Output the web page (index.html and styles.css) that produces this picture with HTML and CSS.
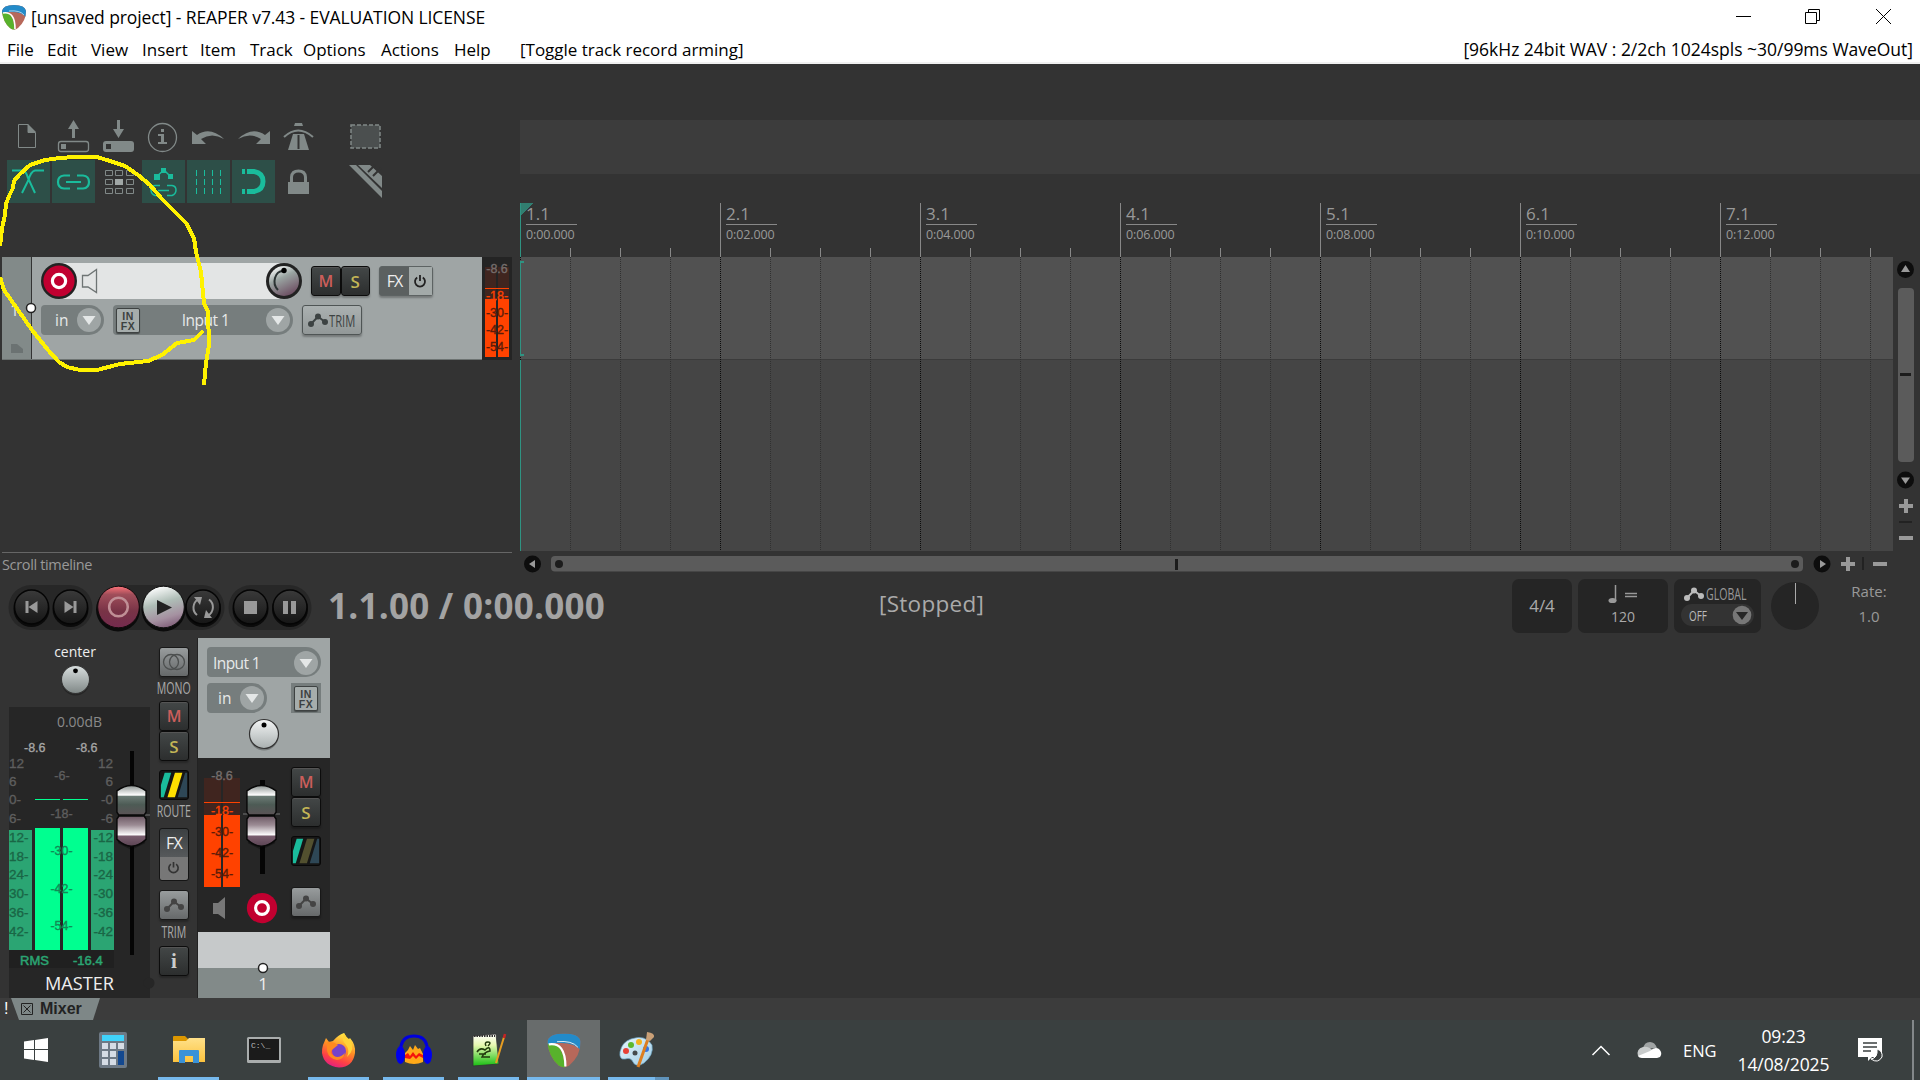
FILE: index.html
```html
<!DOCTYPE html>
<html lang="en">
<head>
<meta charset="utf-8">
<title>[unsaved project] - REAPER v7.43 - EVALUATION LICENSE</title>
<link rel="stylesheet" href="styles.css">
</head>
<body>
<svg class="defs" width="0" height="0">
  <defs>
    <linearGradient id="knobFill" x1="0" y1="0" x2="0" y2="1"><stop offset="0" stop-color="#d9dfdf"/><stop offset="1" stop-color="#7f8786"/></linearGradient>
    <linearGradient id="knobLight" x1="0" y1="0" x2="0" y2="1"><stop offset="0" stop-color="#f3f5f5"/><stop offset="1" stop-color="#a9b0b0"/></linearGradient>
    <linearGradient id="knobPink" x1="0.2" y1="0" x2="0.7" y2="1"><stop offset="0" stop-color="#fff"/><stop offset=".4" stop-color="#9aa5a2"/><stop offset="1" stop-color="#6b4b60"/></linearGradient>
    <linearGradient id="blackBtn" x1="0" y1="0" x2="0" y2="1"><stop offset="0" stop-color="#3a3a3a"/><stop offset="1" stop-color="#161616"/></linearGradient>
    <linearGradient id="recBtn" x1="0" y1="0" x2="0" y2="1"><stop offset="0" stop-color="#ff7379"/><stop offset=".2" stop-color="#a04e5a"/><stop offset=".6" stop-color="#783346"/><stop offset="1" stop-color="#742b4e"/></linearGradient>
    <linearGradient id="playBtn" x1=".35" y1="0" x2=".65" y2="1"><stop offset="0" stop-color="#fff"/><stop offset=".4" stop-color="#aebdb6"/><stop offset=".75" stop-color="#a591a1"/><stop offset="1" stop-color="#7f5d78"/></linearGradient>
    <linearGradient id="capTop" x1="0" y1="0" x2="0" y2="1"><stop offset="0" stop-color="#8d9492"/><stop offset=".33" stop-color="#fff"/><stop offset=".36" stop-color="#6c7c76"/><stop offset=".65" stop-color="#4d5b55"/><stop offset="1" stop-color="#5b5356"/></linearGradient>
    <linearGradient id="capBot" x1="0" y1="0" x2="0" y2="1"><stop offset="0" stop-color="#6d5964"/><stop offset=".3" stop-color="#9c8c95"/><stop offset=".63" stop-color="#fff"/><stop offset=".66" stop-color="#7a5f70"/><stop offset="1" stop-color="#5b4453"/></linearGradient>
    <linearGradient id="foxFill" x1=".7" y1="0" x2=".3" y2="1"><stop offset="0" stop-color="#fff04a"/><stop offset=".45" stop-color="#ff8c24"/><stop offset=".75" stop-color="#ff4145"/><stop offset="1" stop-color="#e01c86"/></linearGradient>
    <linearGradient id="folderFill" x1="0" y1="0" x2="0" y2="1"><stop offset="0" stop-color="#ffe18a"/><stop offset="1" stop-color="#fcc33e"/></linearGradient>
    <linearGradient id="pageFill" x1="0" y1="0" x2="0" y2="1"><stop offset="0" stop-color="#fff"/><stop offset=".35" stop-color="#e7f8b0"/><stop offset="1" stop-color="#17bf12"/></linearGradient>
    <linearGradient id="paletteFill" x1="0" y1="0" x2="1" y2="1"><stop offset="0" stop-color="#e9f6fc"/><stop offset="1" stop-color="#9fcde6"/></linearGradient>
    <clipPath id="pickShape"><path d="M1 7Q2 1 13 1T25 7Q25 17 17 24Q13 27 9 24Q2 18 1 7Z"/></clipPath>
    <symbol id="pick" viewBox="0 0 26 26"><g clip-path="url(#pickShape)"><path d="M0 0H26V26H0Z" fill="#b7685a"/><path d="M0 8Q9 7 12 16L14 26H0Z" fill="#58b22c"/><path d="M0 0H26V15Q22 7 8 8L0 9Z" fill="#238bc9"/><path d="M2 9Q14 7 14 25" fill="none" stroke="#fff" stroke-width="1.6"/><path d="M8 7Q19 6 23 11" fill="none" stroke="#e6eef2" stroke-width=".7"/></g></symbol>
    <symbol id="env" viewBox="0 0 20 14"><path d="M3 11L10 3.5L17 9" fill="none" stroke="currentColor" stroke-width="2"/><circle cx="3" cy="11" r="3" fill="currentColor"/><circle cx="10" cy="3.5" r="3" fill="currentColor"/><circle cx="17" cy="9" r="3" fill="currentColor"/></symbol>
    <symbol id="power" viewBox="0 0 14 14"><path d="M4.2 3.4A5 5 0 1 0 9.8 3.4M7 1V7" fill="none" stroke="currentColor" stroke-width="1.8"/></symbol>
    <symbol id="combo" viewBox="0 0 26 26"><circle cx="13" cy="13" r="12" fill="#9fa5a5"/><path d="M6.500 9H19.500L13 18Z" fill="#e4e7e7"/></symbol>
    <symbol id="arm" viewBox="0 0 36 36"><circle cx="18" cy="18" r="16.500" fill="#c10030"/><circle cx="18" cy="18" r="7" fill="none" stroke="#fff" stroke-width="3.400"/></symbol>
    <symbol id="knob" viewBox="0 0 32 34"><circle cx="16" cy="18" r="14.500" fill="#0004"/><circle cx="16" cy="16" r="14.500" fill="var(--face, url(#knobLight))" stroke="#333" stroke-width="1.200"/><circle cx="16" cy="7" r="2.500" fill="#000"/></symbol>
    <symbol id="cap" viewBox="0 0 34 70"><path d="M3 12L17 5L31 12V61L17 68L3 61Z" fill="#0005"/><path d="M2 7Q17-4 32 7V29L30 32H4L2 29Z" fill="url(#capTop)" stroke="#080808" stroke-width="1.500"/><path d="M4 33H30L32 36V57Q17 71 2 57V36Z" fill="url(#capBot)" stroke="#080808" stroke-width="1.500"/></symbol>
    <symbol id="route" viewBox="0 0 30 30"><path d="M1 28V15L5 2H12L4 28Z" fill="#1abc9c"/><path d="M8 28L16 2H24L16 28Z" fill="var(--mid)"/><path d="M19 28L27 2H29V28Z" fill="#2e4756"/></symbol>
  </defs>
</svg>

<header class="titlebar">
  <svg class="logo" width="26" height="26"><use href="#pick"/></svg>
  <span class="title">[unsaved project] - REAPER v7.43 - EVALUATION LICENSE</span>
  <svg class="winbtns" width="176" height="36" viewBox="1728 0 176 36"><path d="M1736 16.500H1751M1805.500 12.500H1816.500V23.500H1805.500ZM1808.500 12V9.500H1819.500V20.500H1817M1876 9L1891 24M1891 9L1876 24" fill="none" stroke="#000" stroke-width="1"/></svg>
</header>
<nav class="menubar">
  <span>File</span><span>Edit</span><span>View</span><span>Insert</span><span>Item</span><span>Track</span><span>Options</span><span>Actions</span><span>Help</span><span>[Toggle track record arming]</span>
  <span class="device">[96kHz 24bit WAV : 2/2ch 1024spls ~30/99ms WaveOut]</span>
</nav>

<main class="workspace">
  <section class="left">
    <div class="toolbar">
      <svg class="tool" viewBox="7 115 43 43"><path d="M18.500 124.500H28V132.500H35.500V147.500H18.500Z" fill="none" stroke="#818988"/><path d="M28 124L36 132H28Z" fill="#818988"/></svg>
      <svg class="tool" viewBox="52 115 43 43"><rect x="58.500" y="141.500" width="30" height="10" rx="2.500" fill="none" stroke="#818988" stroke-width="1.300"/><path d="M61 144H66V149H61ZM72 138V129H68L73.500 120L79 129H75V138Z" fill="#818988"/></svg>
      <svg class="tool" viewBox="97 115 43 43"><rect x="103" y="141" width="31" height="11" rx="3" fill="#818988"/><path d="M106 144H111V149H106Z" fill="#333"/><path d="M117 120H120V129H124L118.500 138L113 129H117Z" fill="#818988"/></svg>
      <svg class="tool" viewBox="142 115 43 43"><circle cx="162.500" cy="137.500" r="14" fill="none" stroke="#818988" stroke-width="1.300"/><path d="M161 129H164V132H161ZM158 134H164V142H167V144H158V142H161V136H158Z" fill="#818988"/></svg>
      <svg class="tool" viewBox="187 115 43 43"><path d="M192 131V144H206L201 139Q212 132 224 139Q210 126 197 135Z" fill="#818988"/></svg>
      <svg class="tool" viewBox="232 115 43 43"><path d="M270 131V144H256L261 139Q250 132 238 139Q252 126 265 135Z" fill="#818988"/></svg>
      <svg class="tool" viewBox="277 115 43 43"><path d="M284 137Q298 124 313 137" fill="none" stroke="#818988" stroke-width="2"/><path d="M295 123H302L303 126H294ZM293 134H304L309 150H288Z" fill="#818988"/><path d="M298.500 135V149" stroke="#333" stroke-width="2"/></svg>
      <svg class="tool" viewBox="344 115 43 43"><rect x="351" y="125" width="29" height="23" fill="#4b4f4f" stroke="#818988" stroke-width="1.500" stroke-dasharray="4 2"/></svg>
      <svg class="tool on" viewBox="7 160 43 43"><path d="M12 170.500H22Q26 170.500 28 178L35 193M44 170.500H35Q31 171 28 181L22 193" fill="none" stroke="#1abc9c" stroke-width="2"/></svg>
      <svg class="tool on" viewBox="52 160 43 43"><path d="M70 175.500H64Q58 176 58 182T64 188.500H70M77 175.500H83Q89 176 89 182T83 188.500H77M66 182H81" fill="none" stroke="#1abc9c" stroke-width="2.200"/></svg>
      <svg class="tool" viewBox="97 160 43 43"><path d="M105.500 170.500h7v5h-7zm10 0h7v5h-7zm11 0h7v5h-7zm-21 9h7v5h-7zm10 0h7v5h-7zm11 0h7v5h-7zm-21 9h7v5h-7zm10 0h7v5h-7zm11 0h7v5h-7z" fill="none" stroke="#818988"/><path d="M115 179h8v6h-8z" fill="#a0a7a6"/></svg>
      <svg class="tool on" viewBox="142 160 43 43"><path d="M156 177L164 170L171 177M160 185.500H155Q151 186 151 190T155 195.500H160M167 185.500H172Q176 186 176 190T172 195.500H167M158 190.500H169" fill="none" stroke="#1abc9c" stroke-width="1.500"/><path d="M154 174h6v6h-6zM161 168h5v5h-5zM168 174h5v5h-5z" fill="#1abc9c"/></svg>
      <svg class="tool on" viewBox="187 160 43 43"><path d="M196.500 170V194M204.500 170V194M212.500 170V194M220.500 170V194" stroke="#1abc9c" stroke-dasharray="6 3" fill="none"/></svg>
      <svg class="tool on" viewBox="232 160 43 43"><path d="M247 171.500H254Q263 173 263 181.500T254 191.500H247" fill="none" stroke="#1abc9c" stroke-width="5"/><path d="M242 169h3v5h-3zM242 189h3v5h-3z" fill="#1abc9c"/></svg>
      <svg class="tool" viewBox="277 160 43 43"><path d="M291.500 182V177Q292 171 298.500 171T305.500 177V182" fill="none" stroke="#818988" stroke-width="3"/><path d="M288 182h21v12h-21z" fill="#818988"/></svg>
      <svg class="tool" viewBox="344 160 43 43"><path d="M349 165H356L382 191V198ZM358 165H370L382 176V188Z" fill="#818988"/><path d="M368 172L375 165M373 176L381 168" stroke="#333" stroke-width="2"/></svg>
    </div>

    <div class="track">
      <div class="gutter"><span>1</span><svg width="14" height="12"><path d="M1 1H7L13 6V10H1Z" fill="#6b7272"/></svg></div>
      <div class="tcp">
        <div class="tcprow">
          <div class="namebar">
            <svg width="36" height="36" viewBox="0 0 36 36"><circle cx="18" cy="18" r="18" fill="#222"/><use href="#arm" x="1" y="1" width="34" height="34"/></svg>
            <svg width="18" height="36" viewBox="80 263 18 36"><path d="M82.500 275.500H88L96.500 269.500V292.500L88 287H82.500Z" fill="none" stroke="#6e7474" stroke-width="1.300"/></svg>
            <svg class="vol" width="36" height="36" viewBox="0 0 36 36"><circle cx="18" cy="18" r="18" fill="#222"/><circle cx="18" cy="18" r="15" fill="url(#knobPink)"/><path d="M12 27Q7 22 9 15T17 8" fill="none" stroke="#2b3333" stroke-width="2"/><circle cx="18" cy="7.500" r="2.700" fill="#000"/></svg>
          </div>
          <div class="pair"><b class="btn mute">M</b><b class="btn solo">S</b></div>
          <div class="fxpair"><span>FX</span><i><svg width="14" height="14"><use href="#power"/></svg></i></div>
        </div>
        <div class="tcprow second">
          <div class="combo inmode">in<svg width="26" height="26"><use href="#combo"/></svg></div>
          <div class="combo input"><span class="infx">IN<br>FX</span><span class="lbl">Input 1</span><svg width="26" height="26"><use href="#combo"/></svg></div>
          <div class="trim"><svg width="20" height="14"><use href="#env"/></svg><span>TRIM</span></div>
        </div>
      </div>
      <svg class="tcpmeter" width="30" height="103" viewBox="482 257 30 103">
        <path d="M482 257H512V360H482Z" fill="#242424"/><path d="M485 267H496V299H485ZM498 267H509V299H498Z" fill="#40251f"/><path d="M485 288H509V289H485ZM485 299H496V357H485ZM498 299H509V357H498Z" fill="#ff4200"/>
        <g class="scale hot" text-anchor="middle"><text x="497" y="273" class="peak">-8.6</text><text x="497" y="300" class="edge">-18-</text><text x="497" y="317">-30-</text><text x="497" y="334">-42-</text><text x="497" y="351">-54-</text></g>
      </svg>
    </div>
    <div class="status">Scroll timeline</div>
  </section>

  <section class="right">
    <div class="infobar"></div>
    <div class="ruler">
      <div><b>1.1</b><span>0:00.000</span></div><div><b>2.1</b><span>0:02.000</span></div><div><b>3.1</b><span>0:04.000</span></div><div><b>4.1</b><span>0:06.000</span></div><div><b>5.1</b><span>0:08.000</span></div><div><b>6.1</b><span>0:10.000</span></div><div><b>7.1</b><span>0:12.000</span></div>
    </div>
    <svg class="arrange" width="1373" height="294" viewBox="0 0 1373 294">
      <defs><pattern id="grid" width="200" height="2" patternUnits="userSpaceOnUse"><path d="M0 0h1v1h-1z" fill="#0c0c0c"/><path d="M50 0h1v1h-1zM100 0h1v1h-1zM150 0h1v1h-1z" fill="#303030"/></pattern></defs>
      <path d="M0 0H1373V102H0Z" fill="#515151"/><path d="M0 102H1373V294H0Z" fill="#454545"/><path d="M0 102H1373V103H0Z" fill="#3b3b3b"/>
      <path d="M0 0H1373V293H0Z" fill="url(#grid)"/>
      <path d="M0 4H1V98H0ZM0 103H1V294H0ZM0 4H4V6H0ZM0 97H4V99H0Z" fill="#2f9382"/>
    </svg>
    <svg class="vscroll" width="27" height="294" viewBox="1893 257 27 294">
      <circle cx="1905.500" cy="269.500" r="8.500" fill="#0d0d0d"/><path d="M1901 272H1910L1905.500 265Z" fill="#999"/>
      <rect x="1898" y="288" width="16" height="174" rx="4" fill="#5b5b5b"/><path d="M1900 373h11v3h-11z" fill="#1c1c1c"/>
      <circle cx="1905.500" cy="480" r="8.500" fill="#0d0d0d"/><path d="M1901 477.500H1910L1905.500 484Z" fill="#999"/>
      <path d="M1899 504h14v4h-14zM1904 499h4v14h-4zM1899 536h14v4h-14z" fill="#999"/><path d="M1899 521h13v2h-13z" fill="#222"/>
    </svg>
    <svg class="hscroll" width="1400" height="29" viewBox="520 551 1400 29">
      <circle cx="532.500" cy="564" r="8.500" fill="#0d0d0d"/><path d="M535 560V568L529 564Z" fill="#999"/>
      <rect x="551" y="556" width="1252" height="15.500" rx="4" fill="#5b5b5b"/><circle cx="559" cy="564" r="4" fill="#1c1c1c"/><circle cx="1795" cy="564" r="4" fill="#1c1c1c"/><path d="M1175 559h3v11h-3z" fill="#1c1c1c"/>
      <circle cx="1822" cy="564" r="8.500" fill="#0d0d0d"/><path d="M1820 560V568L1826 564Z" fill="#999"/>
      <path d="M1841 562h14v4h-14zM1846 557h4v14h-4zM1873 562h14v4h-14z" fill="#999"/><path d="M1862 557h2v13h-2z" fill="#222"/>
    </svg>
  </section>
</main>

<section class="transport">
  <svg class="buttons" width="314" height="56" viewBox="0 580 314 56">
    <path d="M31 585H70A22.500 22.500 0 0 1 70 630H31A22.500 22.500 0 0 1 31 585ZM118 585H202A22.500 22.500 0 0 1 202 630H118ZM251 585H289A22.500 22.500 0 0 1 289 630H251A22.500 22.500 0 0 1 251 585Z" fill="#272727"/>
    <g fill="#0b0b0b"><circle cx="31.500" cy="609" r="18"/><circle cx="70.500" cy="609" r="18"/><circle cx="118" cy="609.500" r="22"/><circle cx="163.500" cy="609.500" r="22"/><circle cx="203" cy="609" r="18"/><circle cx="250.500" cy="609" r="18"/><circle cx="290" cy="609" r="18"/></g>
    <g fill="url(#blackBtn)" stroke="#050505" stroke-width="1.500"><circle cx="31.500" cy="607" r="17"/><circle cx="70.500" cy="607" r="17"/><circle cx="203" cy="607" r="17"/><circle cx="250.500" cy="607" r="17"/><circle cx="290" cy="607" r="17"/></g>
    <circle cx="118.500" cy="607" r="20.800" fill="url(#recBtn)" stroke="#120a0c"/><circle cx="118.500" cy="607" r="9.300" fill="none" stroke="#c08f96" stroke-width="2.600"/>
    <circle cx="163.500" cy="607" r="20.800" fill="url(#playBtn)" stroke="#111"/><path d="M157 600V615L172 607.500Z" fill="#222"/>
    <path d="M25.500 601h3v12h-3zM37.500 601V613L28.500 607ZM73.500 601h3v12h-3zM64.500 601V613L73.500 607ZM244 601h13v13h-13zM283 601h5v13h-5zM291 601h5v13h-5z" fill="#999"/>
    <path d="M197 615A9.500 9.500 0 0 1 198 599.500M209 599.500A9.500 9.500 0 0 1 208 615.500" fill="none" stroke="#999" stroke-width="2"/><path d="M194 597H202L200 605ZM212 618H204L206 610Z" fill="#999"/>
  </svg>
  <b class="time">1.1.00 / 0:00.000</b>
  <span class="stopped">[Stopped]</span>
  <div class="tbox sig">4/4</div>
  <div class="tbox tempo"><svg width="30" height="20"><path d="M7.500 1V17M17 9.500H29M17 12.500H29" stroke="#999" stroke-width="1.500"/><ellipse cx="4.500" cy="16.500" rx="4" ry="2.600" fill="#999"/></svg><span>120</span></div>
  <div class="tbox global"><div><svg width="20" height="14"><use href="#env"/></svg><span class="narrow">GLOBAL</span></div><div class="off"><span class="narrow">OFF</span><svg width="20" height="20"><circle cx="10" cy="10" r="9.300" fill="#777"/><path d="M4 7H16L10 15Z" fill="#262626"/></svg></div></div>
  <svg class="dial" width="48" height="48"><circle cx="24" cy="24" r="24" fill="#252525"/><path d="M24.500 1V22" stroke="#aaa"/></svg>
  <div class="rate"><span>Rate:</span><span>1.0</span></div>
</section>

<section class="mixer">
  <div class="master">
    <div class="pan"><span>center</span><svg class="panface" width="31" height="33"><use href="#knob"/></svg></div>
    <svg class="mmeter" width="150" height="291" viewBox="9 707 150 291">
      <path d="M9 707H150V998H9Z" fill="#262626"/><circle cx="149" cy="983" r="5.500" fill="#262626"/>
      <path d="M9 950H114V968H9Z" fill="#202020"/>
      <path d="M9 830H32V950H9ZM91 830H114V950H91Z" fill="#2ba573"/><path d="M35 828H60V950H35ZM63 828H88V950H63ZM35 799h25v1h-25zM63 799h25v1h-25z" fill="#00ff90"/>
      <text x="57" y="727" font-size="15" fill="#8a8a8a" textLength="45" lengthAdjust="spacingAndGlyphs">0.00dB</text>
      <g class="scale lite"><text x="24" y="752">-8.6</text><text x="76" y="752">-8.6</text></g>
      <g class="scale big gray"><text x="9" y="768">12</text><text x="9" y="786">6</text><text x="9" y="804">0-</text><text x="9" y="823">6-</text></g>
      <g class="scale big green"><text x="9" y="842">12-</text><text x="9" y="861">18-</text><text x="9" y="879">24-</text><text x="9" y="898">30-</text><text x="9" y="917">36-</text><text x="9" y="936">42-</text></g>
      <g class="scale big gray" text-anchor="end"><text x="113" y="768">12</text><text x="113" y="786">6</text><text x="113" y="804">-0</text><text x="113" y="823">-6</text></g>
      <g class="scale big green" text-anchor="end"><text x="113" y="842">-12</text><text x="113" y="861">-18</text><text x="113" y="879">-24</text><text x="113" y="898">-30</text><text x="113" y="917">-36</text><text x="113" y="936">-42</text></g>
      <g class="scale gray" text-anchor="middle"><text x="62" y="780">-6-</text><text x="61.500" y="818">-18-</text></g>
      <g class="scale bright" text-anchor="middle"><text x="61.500" y="855">-30-</text><text x="61.500" y="893">-42-</text><text x="61.500" y="930">-54-</text></g>
      <g class="scale rms"><text x="20" y="965">RMS</text><text x="73" y="965">-16.4</text></g>
      <text x="45" y="990" font-size="19" fill="#eee" textLength="69" lengthAdjust="spacingAndGlyphs">MASTER</text>
      <path d="M130 751h4v204h-4z" fill="#050505"/><path d="M125 815H150" stroke="#777"/><use href="#cap" x="114.500" y="784" width="34" height="68"/>
    </svg>
  </div>
  <div class="mbuttons">
    <div class="gbtn mono"><svg width="24" height="18"><circle cx="9" cy="9" r="7.500" fill="none" stroke="#4c4f4f" stroke-width="1.300"/><circle cx="15" cy="9" r="7.500" fill="none" stroke="#4c4f4f" stroke-width="1.300"/></svg></div>
    <span class="cap mono-l"><span class="narrow">MONO</span></span>
    <b class="btn mute">M</b><b class="btn solo">S</b>
    <svg class="route master-route" width="30" height="30"><use href="#route"/></svg>
    <span class="cap route-l"><span class="narrow">ROUTE</span></span>
    <div class="vfx"><span>FX</span><i><svg width="13" height="13"><use href="#power"/></svg></i></div>
    <div class="gbtn env"><svg width="20" height="14"><use href="#env"/></svg></div>
    <span class="cap trim-l"><span class="narrow">TRIM</span></span>
    <b class="btn info">i</b>
  </div>
  <div class="strip">
    <div class="striptop">
      <div class="combo">Input 1<svg width="26" height="26"><use href="#combo"/></svg></div>
      <div class="inrow"><div class="combo small">in<svg width="26" height="26"><use href="#combo"/></svg></div><div class="infxbox"><span class="infx">IN<br>FX</span></div></div>
      <svg class="panknob" width="32" height="34"><use href="#knob"/></svg>
    </div>
    <div class="stripmid">
      <svg width="93" height="174" viewBox="198 758 93 174">
        <path d="M204 778H221V815H204ZM223 778H240V815H223Z" fill="#40251f"/><path d="M204 802H240V803H204ZM204 815H221V887H204ZM223 815H240V887H223Z" fill="#ff4200"/>
        <g class="scale hot" text-anchor="middle"><text x="222" y="780" class="peak">-8.6</text><text x="222" y="815" class="edge">-18-</text><text x="222" y="836">-30-</text><text x="222" y="857">-42-</text><text x="222" y="878">-54-</text></g>
        <path d="M260 780h5v94h-5z" fill="#050505"/><path d="M243 814H280" stroke="#777"/><use href="#cap" x="244.500" y="784" width="34" height="68"/>
        <path d="M213 903H218L225 897V919L218 914H213Z" fill="#777"/><use href="#arm" x="245.500" y="891.500" width="33" height="33"/>
      </svg>
      <div class="sbtns"><b class="btn mute">M</b><b class="btn solo">S</b><svg class="route dim" width="30" height="30"><use href="#route"/></svg><div class="gbtn env"><svg width="20" height="14"><use href="#env"/></svg></div></div>
    </div>
    <div class="stripname"></div>
    <div class="stripnum">1</div>
  </div>
</section>

<div class="dock"><span class="bang">!</span><div class="tab"><svg width="12" height="12"><path d="M.5 .5H11.500V11.500H.5ZM2.500 2.500L9.500 9.500M9.500 2.500L2.500 9.500" fill="none" stroke="#222"/></svg><b>Mixer</b></div></div>

<footer class="taskbar">
  <div class="task start"><svg width="24" height="24"><path d="M0 3.500L10 2V11H0ZM11 2L24 0V11H11ZM0 12H10V22L0 20.500ZM11 12H24V24L11 22Z" fill="#fff"/></svg></div>
  <div class="task calc"><svg width="28" height="36"><rect width="28" height="36" rx="2" fill="#6d7985"/><path d="M3 3H25V9H3Z" fill="#40d3fb"/><path d="M3 11h6v6h-6zm8 0h6v6h-6zm8 0h6v6h-6zM3 19h6v6h-6zm8 0h6v6h-6zM3 27h6v6h-6zm8 0h6v6h-6z" fill="#d5dce5"/><path d="M19 19h6v14h-6z" fill="#13488f"/></svg></div>
  <div class="task run"><svg width="32" height="28"><path d="M0 1Q0 0 1 0H12L15 3V7H0Z" fill="#dc9700"/><path d="M0 5H13L16 2H32V26H0Z" fill="url(#folderFill)"/><path d="M6 27V15Q6 14 7 14H25Q26 14 26 15V27H20V20H12V27Z" fill="#3a92d8"/></svg></div>
  <div class="task"><svg width="34" height="26"><rect width="34" height="26" rx="1.500" fill="#a9adad"/><path d="M2 2H32V23H2Z" fill="#1b1b1b"/><text x="4" y="11" font-size="8" fill="#bbb" font-family="Liberation Mono">C:\_</text></svg></div>
  <div class="task run fox"><svg width="34" height="35"><path d="M1 12L4 5L7 9L11 8Q16 2 22 0Q24 4 26 7L28 5Q34 12 33 20Q31 34 17 34.500Q2 33 0 20Q0 15 1 12Z" fill="url(#foxFill)"/><circle cx="17" cy="18" r="7" fill="#7743c9"/><path d="M5 9Q11 8 16 12L11 16Q6 19 12 23Q17 26 23 20Q22 26 15 27Q7 26 5 18Z" fill="#ff8a1f"/><path d="M22 0Q19 7 24 12Q28 17 25 24Q34 16 28 7Q24 4 22 0Z" fill="#ffd338"/></svg></div>
  <div class="task run"><svg width="36" height="32"><path d="M5 18V12Q7 2 18 2T31 12V18" fill="none" stroke="#0000dc" stroke-width="3"/><path d="M9 28V19L12 16L14 12L17 16L19 11L22 15L24 14L27 20V28Q18 32 9 28Z" fill="#ffa918"/><path d="M9 21L12 19L14 22L17 18L20 22L23 19L27 21V24L23 22L20 25L17 22L14 25L9 24Z" fill="#f5140c"/><ellipse cx="4.500" cy="21" rx="4.500" ry="9" fill="#0000ed"/><ellipse cx="31.500" cy="21" rx="4.500" ry="9" fill="#0000ed"/></svg></div>
  <div class="task run"><svg width="34" height="34"><path d="M1 3L24 1L27 31L1 33Z" fill="url(#pageFill)" stroke="#333" stroke-width=".8"/><path d="M2 3H23" stroke="#333" stroke-width="2" stroke-dasharray="1.500 1"/><path d="M5 19Q8 14 13 17Q18 12 18 18Q12 19 10 24H18M7 21H14M14 13Q12 9 16 9T16 13" fill="none" stroke="#223b0d" stroke-width="1.500"/><path d="M32 4L24 30" stroke="#e79d22" stroke-width="2"/><path d="M33 1L32 5" stroke="#c42424" stroke-width="2.600"/></svg></div>
  <div class="task run active"><svg width="36" height="36"><use href="#pick" width="36" height="36"/></svg></div>
  <div class="task paint"><svg width="38" height="36"><path d="M12 7Q26 2 33 13Q35 23 25 31Q17 36 14 30Q12 25 6 27Q0 28 1 20Q3 10 12 7Z" fill="url(#paletteFill)" stroke="#6ba5c3" stroke-width=".7"/><circle cx="12" cy="13" r="3" fill="#5db82d"/><circle cx="20" cy="10" r="3" fill="#f5b21d"/><circle cx="7" cy="19" r="3" fill="#e74236"/><circle cx="27" cy="17" r="3" fill="#3575df"/><circle cx="16" cy="21" r="2.500" fill="#454b4d"/><path d="M29 7L19 35" stroke="#dc7e20" stroke-width="3"/><path d="M27 8L28 0Q36 1 35 5L31 9Z" fill="#c9a077"/></svg></div>
  <div class="tray">
    <svg width="18" height="11"><path d="M.5 10L9 1.500L17.500 10" fill="none" stroke="#fff" stroke-width="1.500"/></svg>
    <svg class="cloud" width="25" height="17"><path d="M6 7Q7 0 13 0Q18 0 20 6Z" fill="#a0a4a4"/><path d="M1 14Q-1 7 6 5Q12 4 16 9L6 16Z" fill="#c9cccc"/><path d="M13 9Q18 4 22 7Q26 11 23 15L20 16H5Q2 16 1 14Z" fill="#fff"/></svg>
    <span class="eng">ENG</span>
    <div class="clock"><span>09:23</span><span>14/08/2025</span></div>
    <svg class="note" width="26" height="26"><path d="M1 1H25V20H15L11 24V20H1Z" fill="#fff"/><path d="M6 6H20M6 10H20M6 14H14" stroke="#3b4040" stroke-width="1.300"/><path d="M20 12Q26 14 25 20Q21 27 14 22Q21 21 20 12Z" fill="#3b4040" stroke="#fff"/></svg>
  </div>
</footer>

<svg class="scribble" width="230" height="400" viewBox="0 0 230 400">
  <circle cx="31" cy="308" r="4.500" fill="#fff" stroke="#222" stroke-width="1.500"/>
  <path d="M0 246L2 228L5 215L6 204L9 196L13 188L14 181L20 174L30 165L45 160L60 158L75 157H97L110 161L125 166L138 175L150 185L162 199L175 212L186 223L194 238L196 252L201 272L204 303L208 312L209 345L206 363L204 385M0 277L4 290L18 310L32 330L48 350L59 362L67 367L80 370H97L120 364L148 361L162 355L177 343L194 340L203 331" fill="none" stroke="#fff200" stroke-width="4" shape-rendering="crispEdges"/>
</svg>
<svg class="stripdot" width="12" height="12"><circle cx="6" cy="6" r="4.500" fill="#fff" stroke="#222" stroke-width="1.500"/></svg>
</body>
</html>
```
FILE: styles.css
```css
* { box-sizing: border-box; }
body { margin: 0; width: 1920px; height: 1080px; overflow: hidden; background: #333; color: #aaa; display: flex; flex-direction: column; position: relative; font-family: "Open Sans", "Noto Sans", sans-serif; }
svg { display: block; flex: none; overflow: visible; }
i { font-style: normal; }
span, b { white-space: nowrap; }
.defs { position: absolute; }

.titlebar { height: 36px; background: #fff; color: #000; display: flex; align-items: center; padding: 0 16px 0 1px; flex: none; }
.logo { margin-top: -2px; }
.title { font-size: 17.500px; letter-spacing: -.1px; margin: -2px 0 0 4px; }
.winbtns { margin-left: auto; }
.menubar { height: 28px; flex: none; background: #fff; border-bottom: 2px solid #f0f0f0; color: #000; font-size: 17px; letter-spacing: -.02px; line-height: 27px; padding-left: 7px; display: grid; grid-template-columns: 40px 44px 51px 58px 50px 53px 78px 73px 66px auto 1fr; }
.device { text-align: right; padding-right: 7px; font-size: 17.500px; letter-spacing: -.02px; }

.workspace { height: 516px; flex: none; display: grid; grid-template-columns: 520px 1400px; }
.left { display: flex; flex-direction: column; }
.toolbar { margin: 51px 0 0 7px; display: grid; grid-template-columns: repeat(6, 45px) 67px 45px; grid-auto-rows: 45px; }
.tool { width: 43px; height: 43px; overflow: hidden; }
.tool.on { background: #2d4f48; }
.track { margin: 52px 0 0 2px; height: 103px; display: flex; border-bottom: 1px solid #6d7372; width: 510px; }
.gutter { width: 30px; background: #828a89; border-right: 1px solid #333; color: #e4e7e7; font-size: 16px; padding: 42px 0 0 8px; display: flex; flex-direction: column; }
.gutter svg { margin-top: 22px; }
.tcp { flex: 1; background: #9fa5a5; padding: 6px 0 0 9px; }
.tcprow { display: flex; height: 36px; align-items: center; }
.namebar { width: 261px; height: 36px; display: flex; gap: 3px; background: linear-gradient(90deg, transparent 18px, #e3e5e5 18px) 0 0 / 243px 36px no-repeat; }
.vol { margin-left: auto; }
.pair { display: flex; margin-left: 9px; }
.btn { width: 30px; height: 30px; display: flex; align-items: center; justify-content: center; font: 600 17px "Open Sans", sans-serif; border-radius: 3px; background: linear-gradient(#434747, #2c2e2e); border: 1px solid #0c0c0c; box-shadow: 0 2px 2px #0004, inset 0 1px #555; flex: none; }
.mute { color: #cb5e5b; font-size: 16px; }
.solo { color: #c3b556; }
.pair .btn { width: 29.500px; }
.fxpair { display: flex; width: 54px; height: 30px; margin-left: 9px; border: 1px solid #5d6363; border-radius: 3px; background: #5b6060; color: #eee; font-size: 16px; line-height: 28px; box-shadow: 0 2px 2px #0004; }
.fxpair span { width: 29px; text-align: center; letter-spacing: -1px; }
.fxpair i { flex: 1; background: #a3aaa9; color: #222; padding: 7px 0 0 4px; }
.second { margin-top: 6px; height: 30px; }
.combo { height: 30px; flex: none; background: #767d7d; border-radius: 4px 15px 15px 4px; display: flex; align-items: center; justify-content: space-between; color: #e7e9e9; font-size: 15.500px; padding: 0 2px 0 14px; }
.inmode { width: 63px; }
.input { width: 180px; margin-left: 9px; padding-left: 3px; letter-spacing: -.5px; }
.infx { width: 24px; height: 25px; padding-top: 2px; display: block; text-align: center; background: #a6adac; border: 1px solid #3e4242; border-radius: 2px; color: #3c4141; font: bold 10.500px/10px "Liberation Sans", sans-serif; letter-spacing: .5px; box-shadow: 0 1px 1px #0006; }
.input .lbl { margin-left: 6px; }
.trim { margin-left: 9px; width: 60px; height: 30px; border: 1px solid #4f5555; border-radius: 3px; background: linear-gradient(#abb1b1, #929898); box-shadow: 0 2px 2px #0004; color: #3d4343; display: flex; align-items: center; padding-left: 5px; }
.trim span { font-size: 17px; width: 27px; transform: scaleX(.66); transform-origin: left; margin-left: 1px; }
.narrow { font-size: 16px; transform: scaleX(.66); display: block; }
.scale { font: 12.500px "Liberation Sans", sans-serif; stroke-width: .35px; }
.scale.big { font-size: 13.500px; }
.gray { fill: #5e5e5e; stroke: #5e5e5e; }
.green { fill: #1a6646; stroke: #1a6646; }
.bright { fill: #128a55; stroke: #128a55; }
.lite { fill: #a5a5a5; stroke: #a5a5a5; }
.rms { fill: #2ba573; stroke: #2ba573; font-size: 13px; stroke-width: .5px; }
.hot { fill: #5c1c08; stroke: #5c1c08; }
.hot .peak { fill: #756e6c; stroke: #756e6c; }
.hot .edge { fill: #ff4200; stroke: #ff4200; }
.status { margin: 192px 0 0 2px; width: 510px; border-top: 1px solid #666; padding-top: 3px; font-size: 14.500px; line-height: 17px; color: #999; letter-spacing: -.35px; }

.right { display: grid; grid-template-columns: 1373px 27px; grid-template-rows: 83px 54px 294px 29px; padding-top: 56px; }
.infobar { grid-column: 1 / 3; background: #3c3c3c; height: 54px; }
.ruler { grid-column: 1 / 3; display: grid; grid-template-columns: repeat(7, 200px); color: #999; width: 1373px; overflow: hidden; background: repeating-linear-gradient(90deg, #888 0 1px, transparent 1px 50px) 0 45px / 1373px 9px no-repeat; }
.ruler div { border-left: 1px solid #888; padding: 1px 0 0 5px; display: flex; flex-direction: column; align-items: flex-start; }
.ruler div:first-child { border-color: #2f9382; background: linear-gradient(135deg, #317e70 9px, transparent 9px) no-repeat; }
.ruler b { font-weight: 400; font-size: 17px; line-height: 20px; width: 51px; border-bottom: 1px solid #888; }
.ruler span { font-size: 12.500px; line-height: 19px; letter-spacing: -.1px; }
.hscroll { grid-column: 1 / 3; }

.transport { height: 58px; flex: none; display: flex; }
.time { width: 551px; margin: 0 0 0 14px; font-size: 35px; line-height: 52px; letter-spacing: .25px; color: #a3a3a3; }
.stopped { width: 633px; font-size: 22.500px; line-height: 47px; letter-spacing: .3px; }
.tbox { background: #252525; border-radius: 7px; height: 54px; margin: -1px 6px 0 0; flex: none; }
.sig { width: 60px; font-size: 17px; line-height: 54px; text-align: center; }
.tempo { width: 90px; display: flex; flex-direction: column; align-items: center; padding-top: 5px; font-size: 14px; line-height: 26px; }
.global { width: 87px; padding: 6px 7px 0; color: #bbb; }
.global > div { display: flex; align-items: center; height: 18px; padding-left: 3px; }
.global .narrow { transform-origin: left; margin-left: 2px; color: #999; }
.global > .off { background: #333; border-radius: 11px; height: 22px; margin-top: 1px; width: 73px; justify-content: space-between; padding: 0 2px 0 6px; }
.off .narrow { width: 20px; color: #bbb; font-size: 15px; }
.dial { margin: 2px 27px 0 4px; }
.rate { display: flex; flex-direction: column; align-items: center; width: 46px; font-size: 15px; line-height: 25px; color: #999; margin-top: -1px; }

.mixer { height: 360px; flex: none; display: flex; }
.master { width: 150px; padding-left: 9px; }
.pan { height: 69px; display: flex; flex-direction: column; align-items: center; width: 132px; color: #eee; font-size: 14px; line-height: 16px; padding-top: 6px; gap: 4px; }
.panface { --face: url(#knobFill); }
.mmeter { width: 150px; }
.mbuttons { width: 48px; padding: 9px 0 0 9px; display: flex; flex-direction: column; border-right: 1px solid #222; }
.gbtn { width: 30px; height: 30px; border: 1px solid #181818; border-radius: 3px; background: linear-gradient(#989c9d, #66696a); display: flex; align-items: center; justify-content: center; color: #444; box-shadow: 0 2px 2px #0004; flex: none; }
.cap { width: 30px; height: 18px; display: flex; justify-content: center; line-height: 18px; flex: none; color: #aaa; }
.mono-l { margin: 2px 0 4px; }
.route { background: #161616; border: 1px solid #080808; border-radius: 3px; }
.master-route { --mid: #ffe000; margin-top: 9px; }
.dim { --mid: #52502f; }
.route-l { margin: 2px 0 8px; }
.vfx { width: 30px; height: 53px; border: 1px solid #151515; border-radius: 3px; background: linear-gradient(#3c4042, #56595b 28px, #777 28px, #777); color: #eee; font-size: 16px; letter-spacing: -.8px; text-align: center; line-height: 28px; flex: none; }
.vfx i { display: block; color: #333; padding: 4px 0 0 7px; }
.mbuttons .env { margin-top: 9px; }
.trim-l { margin: 3px 0 5px; }
.info { font: bold 21px "Liberation Serif", serif; color: #ccc; }
.strip { width: 132px; }
.striptop { height: 120px; background: #9fa5a5; padding: 9px 9px 0; display: flex; flex-direction: column; gap: 6px; }
.striptop .combo { padding-left: 6px; letter-spacing: -.6px; padding-top: 1px; }
.inrow { display: flex; justify-content: space-between; }
.striptop .small { width: 60px; padding-left: 11px; letter-spacing: 0; padding-top: 0; }
.infxbox { background: #767d7d; width: 30px; height: 30px; padding: 3px; }
.panknob { margin: -1px 0 0 41px; }
.stripmid { height: 174px; background: #262626; display: flex; }
.sbtns { padding-top: 9px; display: flex; flex-direction: column; }
.sbtns .route { margin-top: 9px; }
.sbtns .env { margin-top: 21px; }
.stripname { height: 36px; background: #c6c9ca; }
.stripnum { height: 30px; background: #828a89; color: #eee; text-align: center; font-size: 17px; line-height: 31px; padding-right: 2px; }

.dock { height: 22px; flex: none; background: #3c3c3c; color: #fff; display: flex; padding-left: 4px; font: 16px/22px "Liberation Sans", sans-serif; }
.bang { width: 7px; }
.tab { width: 89px; background: #7e8787; clip-path: polygon(0 0, 100% 0, 82px 100%, 8px 100%); color: #222; display: flex; align-items: center; padding: 0 0 0 10px; gap: 7px; }

.taskbar { height: 60px; flex: none; background: #3a4040; display: flex; color: #fff; }
.task { width: 75px; height: 60px; display: flex; align-items: center; justify-content: center; border: solid transparent; border-width: 0 7px; }
.start { width: 72px; border-width: 0; }
.calc { width: 82px; margin-right: -3px; }
.run { background: linear-gradient(#76b9ed, #76b9ed) 0 57px / 61px 3px no-repeat; background-origin: padding-box; }
.active { width: 73px; border-width: 0; margin: 0 1px; background: linear-gradient(#76b9ed, #76b9ed) 0 57px / 100% 3px no-repeat, #686c6c; }
.paint { width: 74px; background: linear-gradient(90deg, #76b9ed 47px, #5f93bb 47px) 0 57px / 61px 3px no-repeat; background-origin: padding-box; }
.tray { margin-left: auto; display: flex; align-items: center; border-right: 2px solid #83888a; margin-right: 6px; }
.cloud { margin: 0 21px 0 27px; }
.eng { font-size: 16.500px; width: 53px; }
.clock { width: 95px; display: flex; flex-direction: column; align-items: center; font-size: 17.500px; line-height: 28px; letter-spacing: -.1px; }
.note { margin: 0 29px 0 26px; }

.scribble { position: absolute; left: 0; top: 0; pointer-events: none; }
.stripdot { position: absolute; left: 257px; top: 962px; }
```
